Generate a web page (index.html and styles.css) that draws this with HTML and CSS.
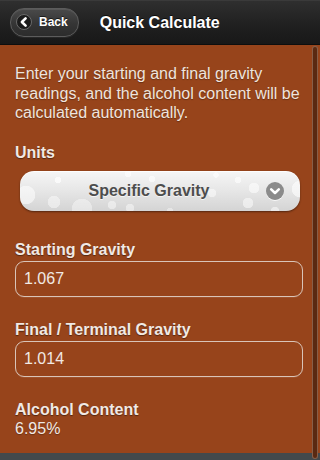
FILE: index.html
```html
<!DOCTYPE html>
<html lang="en">
<head>
<meta charset="utf-8">
<title>Quick Calculate</title>
<link rel="stylesheet" href="styles.css">
</head>
<body>
<div class="app">
  <header class="bar">
    <button class="back" type="button">
      <span class="back-icon">
        <svg width="16" height="16" viewBox="0 0 16 16" aria-hidden="true">
          <circle cx="8" cy="8" r="7.5" fill="#1c1c1c" stroke="#6a6a6a" stroke-width="1"/>
          <path d="M9.6 4.3 L5.9 8 L9.6 11.7" fill="none" stroke="#ffffff" stroke-width="2.6" stroke-linecap="round" stroke-linejoin="round"/>
        </svg>
      </span>
      <span class="back-text">Back</span>
    </button>
    <h1 class="title">Quick Calculate</h1>
  </header>

  <main class="content">
    <p class="intro">Enter your starting and final gravity readings, and the alcohol content will be calculated automatically.</p>

    <div class="label label-units">Units</div>
    <div class="select">
      <span class="select-text">Specific Gravity</span>
      <span class="select-icon">
        <svg width="18" height="18" viewBox="0 0 18 18" aria-hidden="true">
          <circle cx="9" cy="9" r="9" fill="#8b8b8b"/>
          <path d="M5.2 7.4 L9 11 L12.8 7.4" fill="none" stroke="#ffffff" stroke-width="2.6" stroke-linecap="round" stroke-linejoin="round"/>
        </svg>
      </span>
    </div>

    <label class="label label-gap-lg" for="sg">Starting Gravity</label>
    <input class="input" id="sg" type="text" value="1.067" readonly>

    <label class="label label-gap" for="fg">Final / Terminal Gravity</label>
    <input class="input" id="fg" type="text" value="1.014" readonly>

    <div class="label label-gap">Alcohol Content</div>
    <div class="value">6.95%</div>
  </main>

  <footer class="bottom"></footer>
  <div class="scrollbar"></div>
</div>
</body>
</html>
```

FILE: styles.css
```css
* { box-sizing: border-box; }

html, body {
  margin: 0;
  padding: 0;
}

body {
  font-family: "Liberation Sans", Arial, Helvetica, sans-serif;
  background: #97441b;
  color: #f1e9e4;
}

.app {
  position: relative;
  width: 320px;
  height: 460px;
  display: flex;
  flex-direction: column;
  overflow: hidden;
}

.bar {
  height: 45px;
  flex: 0 0 45px;
  display: flex;
  align-items: center;
  padding-left: 10px;
  gap: 21px;
  background: linear-gradient(#2f2f2f, #1f1f1f 60%, #181818);
  border-top: 1px solid #3a3a3a;
  border-bottom: 1px solid #0e0e0e;
}

.back {
  height: 29px;
  margin-top: -1px;
  display: flex;
  align-items: center;
  gap: 7px;
  padding: 0 10px 0 5px;
  border-radius: 14px;
  border: 1px solid #5c5c5c;
  background: linear-gradient(#4a4a4a, #353535 55%, #2c2c2c);
  box-shadow: inset 0 1px 0 rgba(255,255,255,0.08), 0 1px 0 rgba(255,255,255,0.06);
  color: #ffffff;
  font-family: inherit;
  font-size: 12px;
  font-weight: bold;
  cursor: pointer;
}

.back-icon {
  display: flex;
  width: 16px;
  height: 16px;
}

.back-text {
  line-height: 1;
  text-shadow: 0 -1px 0 rgba(0,0,0,0.6);
}

.title {
  margin: 0;
  font-size: 16px;
  font-weight: bold;
  color: #ffffff;
  text-shadow: 0 -1px 0 rgba(0,0,0,0.7);
}

.content {
  flex: 1 1 auto;
  padding: 19px 17px 0 15px;
  display: flex;
  flex-direction: column;
}

.intro {
  margin: 0;
  font-size: 16px;
  line-height: 19.5px;
  color: #efe4de;
  text-shadow: 0 1px 1px rgba(0,0,0,0.3);
}

.label {
  display: block;
  font-size: 16px;
  font-weight: bold;
  line-height: 19px;
  color: #f1e9e4;
  text-shadow: 0 1px 1px rgba(0,0,0,0.45);
}

.label-units { margin-top: 20px; }
.label-gap-lg { margin-top: 29px; }
.label-gap { margin-top: 23px; }

.select {
  margin: 9px 3px 0 5px;
  height: 40px;
  display: flex;
  align-items: center;
  padding-left: 12px;
  border-radius: 14px;
  background:
    radial-gradient(circle at 6px 24px, rgba(255,255,255,0.55) 0 9px, transparent 9.5px),
    radial-gradient(circle at 38px 9px, rgba(255,255,255,0.7) 0 3px, transparent 3.5px),
    radial-gradient(circle at 34px 31px, rgba(255,255,255,0.45) 0 6px, transparent 6.5px),
    radial-gradient(circle at 62px 38px, rgba(255,255,255,0.4) 0 10px, transparent 10.5px),
    radial-gradient(circle at 92px 34px, rgba(255,255,255,0.45) 0 4px, transparent 4.5px),
    radial-gradient(circle at 108px 3px, rgba(255,255,255,0.6) 0 3px, transparent 3.5px),
    radial-gradient(circle at 132px 8px, rgba(255,255,255,0.6) 0 3px, transparent 3.5px),
    radial-gradient(circle at 110px 37px, rgba(255,255,255,0.45) 0 4px, transparent 4.5px),
    radial-gradient(circle at 150px 40px, rgba(255,255,255,0.4) 0 3px, transparent 3.5px),
    radial-gradient(circle at 192px 22px, rgba(255,255,255,0.5) 0 4px, transparent 4.5px),
    radial-gradient(circle at 218px 9px, rgba(255,255,255,0.6) 0 3px, transparent 3.5px),
    radial-gradient(circle at 228px 32px, rgba(255,255,255,0.5) 0 5px, transparent 5.5px),
    radial-gradient(circle at 234px 17px, rgba(255,255,255,0.55) 0 5px, transparent 5.5px),
    radial-gradient(circle at 196px 4px, rgba(255,255,255,0.6) 0 2.5px, transparent 3px),
    radial-gradient(circle at 280px 18px, rgba(255,255,255,0.6) 0 8px, transparent 8.5px),
    radial-gradient(circle at 255px 40px, rgba(255,255,255,0.5) 0 4px, transparent 4.5px),
    linear-gradient(#f6f6f6, #e6e6e6 50%, #d4d4d4);
  box-shadow: 0 1px 2px rgba(0,0,0,0.45), inset 0 1px 0 rgba(255,255,255,0.9);
}

.select-text {
  flex: 1 1 auto;
  text-align: center;
  font-size: 16px;
  font-weight: bold;
  color: #4d4d4d;
  text-shadow: 0 1px 0 rgba(255,255,255,0.7);
}

.select-icon {
  display: flex;
  width: 18px;
  height: 18px;
  margin-right: 16px;
  border-radius: 50%;
  box-shadow: 0 1px 0 rgba(255,255,255,0.8);
}

.input {
  display: block;
  width: 100%;
  height: 36px;
  margin: 2px 0 0 0;
  padding: 0 8px;
  border: 1px solid #d9c4b8;
  border-radius: 9px;
  background: #97441b;
  color: #f1e9e4;
  font-family: inherit;
  font-size: 16px;
  outline: none;
  box-shadow: 0 1px 0 rgba(255,255,255,0.08);
}

.value {
  font-size: 16px;
  line-height: 19px;
  color: #f1e9e4;
  text-shadow: 0 1px 1px rgba(0,0,0,0.3);
}

.bottom {
  flex: 0 0 7px;
  height: 7px;
  background: #42494c;
}

.scrollbar {
  position: absolute;
  left: 312px;
  top: 46px;
  width: 6px;
  height: 413px;
  border-radius: 3px;
  background: #5a2911;
  border: 1px solid rgba(190,160,140,0.45);
}
```
